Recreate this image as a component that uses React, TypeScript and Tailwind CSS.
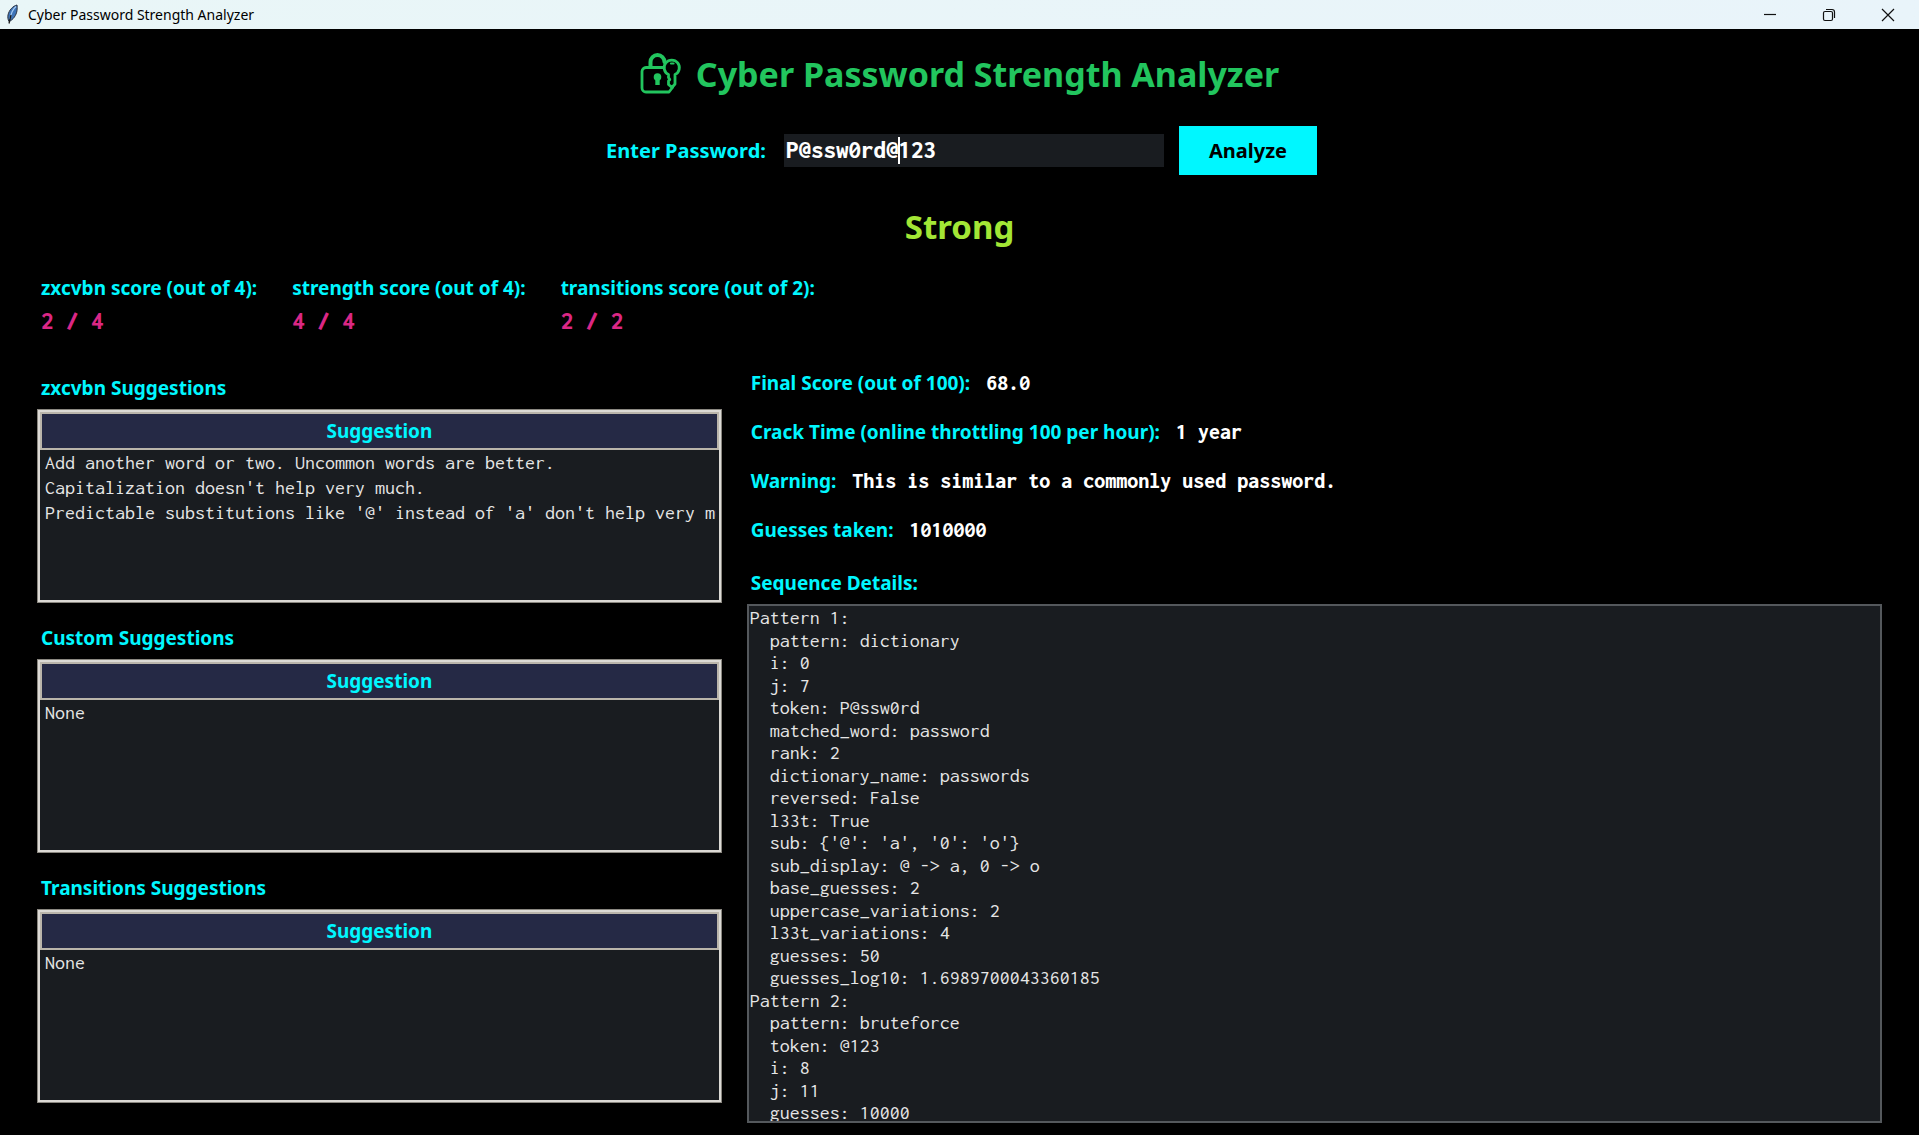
import { useState } from "react";
import type { ReactNode } from "react";

const SCORES = [
  { label: "zxcvbn score (out of 4):", value: "2 / 4" },
  { label: "strength score (out of 4):", value: "4 / 4" },
  { label: "transitions score (out of 2):", value: "2 / 2" },
];

const SUGGESTIONS = [
  {
    title: "zxcvbn Suggestions",
    rows: [
      "Add another word or two. Uncommon words are better.",
      "Capitalization doesn't help very much.",
      "Predictable substitutions like '@' instead of 'a' don't help very much.",
    ],
  },
  { title: "Custom Suggestions", rows: ["None"] },
  { title: "Transitions Suggestions", rows: ["None"] },
];

const RESULTS = [
  { label: "Final Score (out of 100):", value: "68.0" },
  { label: "Crack Time (online throttling 100 per hour):", value: "1 year" },
  { label: "Warning:", value: "This is similar to a commonly used password." },
  { label: "Guesses taken:", value: "1010000" },
];

const SEQUENCE = `Pattern 1:
  pattern: dictionary
  i: 0
  j: 7
  token: P@ssw0rd
  matched_word: password
  rank: 2
  dictionary_name: passwords
  reversed: False
  l33t: True
  sub: {'@': 'a', '0': 'o'}
  sub_display: @ -> a, 0 -> o
  base_guesses: 2
  uppercase_variations: 2
  l33t_variations: 4
  guesses: 50
  guesses_log10: 1.6989700043360185
Pattern 2:
  pattern: bruteforce
  token: @123
  i: 8
  j: 11
  guesses: 10000
  guesses_log10: 4.0`;

const MONO = "font-['Inconsolata','Noto_Sans_Mono_CJK_SC','Liberation_Mono',monospace]";

function FeatherIcon() {
  return (
    <svg width="16" height="22" viewBox="0 0 16 22" aria-hidden="true">
      <path d="M13 1C9 2 5 6 4 11c-.4 2.500-.1 4.500 1 6.500C9 16 12.500 11 13 6.500c.2-2 .3-4 0-5.500z" fill="#3d74b8" stroke="#2b3240" strokeWidth="1" />
      <path d="M12 2.500C9 5 7 9 6 15" fill="none" stroke="#a9cdf3" strokeWidth="1.200" />
      <path d="M7 11l-2 8.500" fill="none" stroke="#1a1a1a" strokeWidth="1.300" />
    </svg>
  );
}

function LockKeyIcon() {
  return (
    <svg width="42" height="42" viewBox="0 0 42 42" fill="none" stroke="#22c55e" strokeWidth="2.800" strokeLinejoin="round" strokeLinecap="round" aria-hidden="true">
      <path d="M23 14.500H6a4 4 0 0 0-4 4V35a4 4 0 0 0 4 4h23l3.500-4.500" />
      <path d="M10.500 14V9a7 7 0 0 1 14 0" strokeWidth="4" />
      <path d="M28.500 21.500a7.600 7.600 0 1 1 6.500 0V31l-3 3.500-3.500-3V28l1.300-1.500-1.300-2z" />
      <path d="M31 10.500h2.500" strokeWidth="2.200" />
      <circle cx="17.500" cy="24" r="3.800" fill="#22c55e" stroke="none" />
      <path d="M17.500 25v7" strokeWidth="4.400" strokeLinecap="butt" />
    </svg>
  );
}

function WindowButton({ label, children }: { label: string; children: ReactNode }) {
  return (
    <button type="button" aria-label={label} className="flex h-full w-[59px] items-center justify-center">
      <svg width="14" height="14" viewBox="0 0 14 14" fill="none" stroke="#111" strokeWidth="1.200" aria-hidden="true">
        {children}
      </svg>
    </button>
  );
}

function TitleBar() {
  return (
    <header className="flex h-[29px] items-center justify-between bg-linear-to-r from-[#e9f6f7] to-[#e9f4fa] pr-[2px] pl-1 text-black">
      <div className="flex items-center gap-2 text-sm">
        <FeatherIcon />
        <span>Cyber Password Strength Analyzer</span>
      </div>
      <div className="flex h-full">
        <WindowButton label="Minimize">
          <path d="M1 6.500h12" />
        </WindowButton>
        <WindowButton label="Restore">
          <rect x="1.500" y="3.500" width="9" height="9" rx="1.500" />
          <path d="M4 1.500h6a2.500 2.500 0 0 1 2.500 2.500v6" />
        </WindowButton>
        <WindowButton label="Close">
          <path d="M1 1l12 12M13 1L1 13" />
        </WindowButton>
      </div>
    </header>
  );
}

function SuggestionPanel({ title, rows }: { title: string; rows: string[] }) {
  return (
    <section>
      <h2 className="px-1 text-[19px] leading-6 font-bold text-[#00f7ff]">{title}</h2>
      <div className="mt-[9px] h-[194px] border border-[#8a8780] bg-[#dcdad5] p-[2px]">
        <div className="h-full overflow-hidden bg-[#191c20]">
          <table aria-label={title} className="w-full table-fixed border-collapse">
            <thead>
              <tr>
                <th className="border-2 border-[#bab5ab] bg-[#252945] p-0 text-[19px] leading-[34px] font-bold text-[#00f7ff]">
                  Suggestion
                </th>
              </tr>
            </thead>
            <tbody>
              {rows.map((row) => (
                <tr key={row}>
                  <td className="py-0 pr-[2px] pl-1">
                    <div className={`overflow-hidden text-xl leading-[25px] whitespace-nowrap text-[#e6e6e6] ${MONO}`}>{row}</div>
                  </td>
                </tr>
              ))}
            </tbody>
          </table>
        </div>
      </div>
    </section>
  );
}

export default function App() {
  const [password, setPassword] = useState("P@ssw0rd@123");

  return (
    <div className="flex min-h-screen flex-col bg-black font-['Noto_Sans','Open_Sans',sans-serif]">
      <TitleBar />
      <main className="flex flex-1 flex-col px-[37px] pb-3">
        <div className="mt-[23px] flex items-center justify-center gap-[14px]">
          <LockKeyIcon />
          <h1 className="text-[34px] leading-[44px] font-bold text-[#22c55e]">Cyber Password Strength Analyzer</h1>
        </div>

        <form className="mt-[30px] flex items-center justify-center pl-1" onSubmit={(e) => e.preventDefault()}>
          <label htmlFor="password" className="mr-[18px] text-xl font-bold text-[#00f7ff]">
            Enter Password:
          </label>
          <div className="relative mr-[15px]">
            <input
              id="password"
              type="text"
              value={password}
              onChange={(e) => setPassword(e.target.value)}
              className={`block h-[33px] w-[380px] bg-[#191c20] px-[2px] text-[25px] font-extrabold text-white outline-none ${MONO}`}
            />
            <span className="pointer-events-none absolute top-[3px] left-[114px] h-[27px] w-[2px] bg-white" />
          </div>
          <button type="submit" className="h-[49px] bg-[#00f7ff] px-[30px] text-xl font-bold text-black">
            Analyze
          </button>
        </form>

        <p className="mt-[30px] text-center text-[33px] leading-[44px] font-bold text-[#a3e635]">Strong</p>

        <dl className="mt-[27px] flex gap-[35px] px-1">
          {SCORES.map((score) => (
            <div key={score.label}>
              <dt className="text-[19px] leading-6 font-bold text-[#00f7ff]">{score.label}</dt>
              <dd className={`mt-[7px] text-[25px] leading-7 font-extrabold text-[#db2785] ${MONO}`}>{score.value}</dd>
            </div>
          ))}
        </dl>

        <div className="mt-9 grid flex-1 grid-cols-[38fr_63fr] gap-[25px]">
          <div className="flex flex-col gap-[23px] pt-[5px]">
            {SUGGESTIONS.map((panel) => (
              <SuggestionPanel key={panel.title} title={panel.title} rows={panel.rows} />
            ))}
          </div>

          <div className="flex flex-col">
            <dl className="flex flex-col gap-[25px] px-1">
              {RESULTS.map((result) => (
                <div key={result.label} className="flex items-baseline gap-4 leading-6 font-bold">
                  <dt className="text-[19px] text-[#00f7ff]">{result.label}</dt>
                  <dd className={`text-[22px] font-extrabold text-white ${MONO}`}>{result.value}</dd>
                </div>
              ))}
            </dl>
            <label htmlFor="sequence" className="mt-[29px] px-1 text-[19px] leading-6 font-bold text-[#00f7ff]">
              Sequence Details:
            </label>
            <textarea
              id="sequence"
              readOnly
              value={SEQUENCE}
              className={`mt-[9px] block w-full flex-1 resize-none overflow-hidden border-2 border-[#54585c] bg-[#191c20] p-px text-xl leading-[1.125] text-[#e6e6e6] outline-none ${MONO}`}
            />
          </div>
        </div>
      </main>
    </div>
  );
}
